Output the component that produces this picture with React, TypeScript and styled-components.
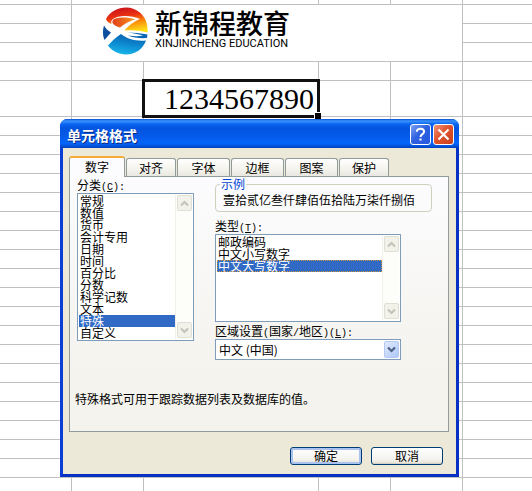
import React, { useState } from "react";
import styled, { createGlobalStyle, css } from "styled-components";

const GlobalStyle = createGlobalStyle`
  * { box-sizing: border-box; }
  body {
    margin: 0;
    background: #fff;
    color: #000;
    font-family: "Noto Sans CJK SC", sans-serif;
    font-size: 12px;
    line-height: 16px;
  }
  button, select { font: inherit; color: inherit; }
`;

const Page = styled.main`
  position: relative;
  height: 100vh;
  min-height: 480px;
  overflow: hidden;
`;

/* ---------- worksheet ---------- */

const Sheet = styled.table`
  width: 100%;
  table-layout: fixed;
  border-collapse: separate;
  border-spacing: 0;
`;

const Column = styled.col<{ $width?: number }>`
  width: ${(p) => (p.$width ? `${p.$width}px` : "auto")};
`;

const Row = styled.tr<{ $height?: number }>`
  height: ${(p) => p.$height ?? 19}px;
`;

const Cell = styled.td`
  position: relative;
  padding: 0;
  border-right: 1px solid #c0c0c0;
  border-bottom: 1px solid #c0c0c0;

  &:last-child {
    border-right: 0;
  }
`;

const SelectedCell = styled(Cell)`
  padding-right: 4px;
  font-family: "Liberation Serif", serif;
  font-size: 30px;
  line-height: 35px;
  text-align: right;
`;

const SelectionFrame = styled.span`
  position: absolute;
  inset: -2px;
  z-index: 1;
  border: 3px solid #111;
  pointer-events: none;

  &::after {
    content: "";
    position: absolute;
    right: -4px;
    bottom: -4px;
    width: 6px;
    height: 6px;
    background: #000;
    border-top: 1px solid #fff;
    border-left: 1px solid #fff;
  }
`;

const Brand = styled.div`
  display: flex;
  align-items: center;
  gap: 7px;
  padding: 0 0 4px 30px;
`;

const BrandText = styled.div`
  display: flex;
  flex-direction: column;
  gap: 2px;
  padding-bottom: 4px;
  white-space: nowrap;
`;

const BrandName = styled.strong`
  font-size: 27px;
  font-weight: 500;
  line-height: 26px;
`;

const BrandLatin = styled.span`
  font-family: Roboto, sans-serif;
  font-size: 11px;
  line-height: 11px;
`;

/* ---------- dialog ---------- */

const Dialog = styled.section`
  position: absolute;
  z-index: 2;
  left: 60px;
  top: 119px;
  width: 75%;
  min-width: 399px;
  max-width: 480px;
  background: #ece9d8;
  border: 3px solid #0a3fd6;
  border-top: 0;
  border-right-color: #0831c4;
  border-bottom-color: #0831c4;
  border-radius: 8px 8px 0 0;
`;

const TitleBar = styled.header`
  display: flex;
  align-items: center;
  gap: 2px;
  height: 29px;
  margin: 0 -3px;
  padding: 2px 5px 0 7px;
  border-radius: 7px 7px 0 0;
  background: linear-gradient(#0a4fd0 0, #3c94ff 2px, #0a66f0 5px, #0355e0 9px, #0459e8 17px, #0566fb 24px, #0453dd 27px, #0240b8 29px);
`;

const Title = styled.h1`
  flex: 1;
  margin: 0;
  color: #fff;
  font-size: 14px;
  font-weight: 700;
  line-height: 24px;
  text-shadow: 1px 1px 0 #0a2a80;
`;

const CaptionButton = styled.button<{ $danger?: boolean }>`
  display: grid;
  place-items: center;
  width: 21px;
  height: 21px;
  padding: 0;
  border: 1px solid #fff;
  border-radius: 3px;
  background: ${(p) =>
    p.$danger
      ? "linear-gradient(135deg, #ee9478, #e0532e 45%, #c8401c)"
      : "linear-gradient(135deg, #7fa3f5, #2f62e0 45%, #2458e0)"};
`;

const Body = styled.div`
  padding: 8px 7px 9px 6px;
`;

const TabList = styled.div`
  display: flex;
  align-items: flex-end;
  gap: 1px;
  height: 20px;
`;

const Tab = styled.button<{ $wide?: boolean }>`
  width: ${(p) => (p.$wide ? 53 : 50)}px;
  height: 18px;
  padding: 0;
  border: 1px solid #919b9c;
  border-bottom: 0;
  border-radius: 3px 3px 0 0;
  background: linear-gradient(#fff, #f4f3ec 60%, #e9e8e0);
  line-height: 16px;

  &[aria-selected="true"] {
    position: relative;
    width: 56px;
    height: 21px;
    margin-bottom: -1px;
    padding-bottom: 2px;
    border-top: 2px solid #f5ac36;
    background: #fcfcfe;
  }
`;

const Panel = styled.div`
  padding: 0 16px 24px 7px;
  border: 1px solid #919b9c;
  background: linear-gradient(#fcfcfe, #f4f3ee 75%);
`;

const Columns = styled.div`
  display: grid;
  grid-template-columns: 117px 1fr;
  gap: 21px;
`;

const Stack = styled.div`
  display: flex;
  flex-direction: column;
  align-items: flex-start;
`;

const Label = styled.label`
  display: block;
  height: 16px;
  white-space: nowrap;
`;

const Latin = styled.span`
  font-family: "Liberation Mono", monospace;
  font-size: 10px;
`;

const ListFrame = styled.div<{ $rows: number; $width: number }>`
  display: flex;
  width: ${(p) => p.$width}px;
  height: ${(p) => p.$rows * 12 + 4}px;
  padding: 1px;
  border: 1px solid #7f9db9;
  background: #fff;
`;

const ListSelect = styled.select<{ $focused?: boolean }>`
  flex: 1;
  min-width: 0;
  height: 100%;
  padding: 0;
  border: 0;
  border-radius: 0;
  outline: 0;
  overflow: hidden;
  background: #fff;
  scrollbar-width: none;

  option {
    display: flex;
    align-items: center;
    height: 12px;
    min-height: 12px;
    padding: 0 1px 2px;
    overflow: visible;
    line-height: 12px;
  }
  option:checked {
    background: linear-gradient(#316ac5, #316ac5);
    color: #fff;
    -webkit-text-fill-color: #fff;
    ${(p) =>
      p.$focused &&
      css`
        outline: 1px dotted #ce953a;
        outline-offset: -1px;
      `}
  }
`;

const ScrollTrack = styled.div`
  display: flex;
  flex-direction: column;
  justify-content: space-between;
  width: 17px;
  padding: 0 0 1px 1px;
  border-left: 1px solid #f0efe8;
  background: #fdfdfa;
`;

const ScrollButton = styled.button`
  display: grid;
  place-items: center;
  width: 15px;
  height: 16px;
  padding: 0;
  border: 1px solid #e0dfd4;
  border-radius: 2px;
  background: #f3f2ea;
`;

const Sample = styled.fieldset`
  min-width: 0;
  width: 217px;
  margin: 0 0 6px;
  padding: 0 4px 2px;
  border: 1px solid #d0d0bf;
  border-radius: 4px;
`;

const SampleLegend = styled.legend`
  padding: 0 1px;
  color: #0046d5;
  line-height: 14px;
`;

const SampleValue = styled.output`
  display: block;
  padding-left: 3px;
  line-height: 18px;
  white-space: nowrap;
`;

const Combo = styled.div`
  position: relative;
  width: 186px;
  height: 21px;
`;

const ComboSelect = styled.select`
  appearance: none;
  width: 100%;
  height: 21px;
  padding: 0 18px 0 3px;
  border: 1px solid #7f9db9;
  border-radius: 0;
  background: #fff;
  line-height: 18px;
`;

const ComboArrow = styled.span`
  position: absolute;
  top: 2px;
  right: 2px;
  display: grid;
  place-items: center;
  width: 15px;
  height: 17px;
  border: 1px solid #b4c8f4;
  border-radius: 2px;
  background: linear-gradient(135deg, #e1eafe, #aec8f7);
  pointer-events: none;
`;

const Spacer = styled.div`
  height: 1px;
`;

const Note = styled.p`
  margin: 31px 0 0 -2px;
`;

const Actions = styled.footer`
  display: flex;
  justify-content: flex-end;
  gap: 9px;
  padding: 15px 6px 0 0;
`;

const ActionButton = styled.button<{ $primary?: boolean }>`
  width: 72px;
  height: 18px;
  padding: 0;
  border: 1px solid #003c74;
  border-radius: 3px;
  background: linear-gradient(#fff, #f4f3ee 70%, #e3e0d4);
  box-shadow: ${(p) =>
    p.$primary ? "inset 0 0 0 2px #a9c2f0" : "inset 0 -1px 0 #d6d0c5"};
  line-height: 16px;
`;

function Chevron({ up, color }: { up?: boolean; color: string }) {
  return (
    <svg width="9" height="7" viewBox="0 0 9 7" aria-hidden="true">
      <path
        d={up ? "M1 5.5 4.5 2 8 5.5" : "M1 1.5 4.5 5 8 1.5"}
        fill="none"
        stroke={color}
        strokeWidth="2.2"
      />
    </svg>
  );
}

function Emblem() {
  return (
    <svg width="46" height="48" viewBox="0 0 46 48" aria-hidden="true">
      <defs>
        <linearGradient id="warm" x1="0.3" y1="0" x2="0.6" y2="1">
          <stop offset="0" stopColor="#c9101c" />
          <stop offset="0.35" stopColor="#ea3212" />
          <stop offset="0.65" stopColor="#fb8f0a" />
          <stop offset="1" stopColor="#ffe21a" />
        </linearGradient>
        <linearGradient id="cool" x1="0.7" y1="0" x2="0.4" y2="1">
          <stop offset="0" stopColor="#0a5cab" />
          <stop offset="0.5" stopColor="#0c87cf" />
          <stop offset="1" stopColor="#19b5ea" />
        </linearGradient>
        <linearGradient id="inner" x1="0" y1="0" x2="1" y2="0">
          <stop offset="0" stopColor="#e0401c" />
          <stop offset="1" stopColor="#f8941c" />
        </linearGradient>
      </defs>
      <path d="M4 12C8 4.500 16 .5 24 .5c11 0 20.500 8 21.500 20 .2 2 .2 3.500 0 5-8-2-15-2.500-23-2C26 19 32 14.500 38 12 30 8.500 17 7.500 11 12c-2 1.600-2 3-1.500 5C6.500 16 4.500 14 4 12Z" fill="url(#warm)" />
      <path d="M10.500 16c-.5-2 .5-3.800 3-4.500C19 10 27 10.500 33 12.300c-6 2-10.500 4.700-15 8.200-3.500-.8-6-2.300-7.500-4.500Z" fill="url(#inner)" />
      <path d="M2 18.500c1.500 3 4 5 7 7L2.500 33C.5 28.500.5 23 2 18.500Z" fill="#0d4f9e" />
      <path d="M6 38.500c4-4.500 8-8.500 13-11.500 6 5 15 7.500 25 6.500C41 42 33.500 47.500 24 47.500c-7.500 0-14-3.500-18-9Z" fill="url(#cool)" />
      <path d="M25 25.500c7 .2 14 .8 20.500 2l-.6 3.500C39 31.500 31 30.800 26 28.500c6 .9 11 .9 15 .1-5-1.500-10-2.400-16-3.100Z" fill="#0b66b5" />
    </svg>
  );
}

const categories = ["常规", "数值", "货币", "会计专用", "日期", "时间", "百分比", "分数", "科学记数", "文本", "特殊", "自定义"];
const types = ["邮政编码", "中文小写数字", "中文大写数字"];
const tabs = ["数字", "对齐", "字体", "边框", "图案", "保护"];

type ListProps = {
  id: string;
  items: string[];
  initial: string;
  rows: number;
  width: number;
  focused?: boolean;
};

function ListBox({ id, items, initial, rows, width, focused }: ListProps) {
  const [value, setValue] = useState(initial);
  return (
    <ListFrame $rows={rows} $width={width}>
      <ListSelect id={id} size={rows} value={value} $focused={focused} onChange={(e) => setValue(e.target.value)}>
        {items.map((item) => (
          <option key={item}>{item}</option>
        ))}
      </ListSelect>
      <ScrollTrack>
        <ScrollButton type="button" disabled aria-label="向上滚动">
          <Chevron up color="#c5c4b8" />
        </ScrollButton>
        <ScrollButton type="button" disabled aria-label="向下滚动">
          <Chevron color="#c5c4b8" />
        </ScrollButton>
      </ScrollTrack>
    </ListFrame>
  );
}

const cells = (count: number) => Array.from({ length: count }, (_, i) => <Cell key={i} />);

function Worksheet() {
  return (
    <Sheet>
      <colgroup>
        <Column $width={72} />
        <Column $width={72} />
        <Column $width={175} />
        <Column $width={72} />
        <Column $width={72} />
        <Column />
      </colgroup>
      <tbody>
        <Row $height={5}>{cells(6)}</Row>
        <Row>
          <Cell />
          <Cell colSpan={4} rowSpan={3}>
            <Brand>
              <Emblem />
              <BrandText>
                <BrandName>新锦程教育</BrandName>
                <BrandLatin>XINJINCHENG EDUCATION</BrandLatin>
              </BrandText>
            </Brand>
          </Cell>
          <Cell />
        </Row>
        <Row>{cells(2)}</Row>
        <Row>{cells(2)}</Row>
        <Row>{cells(6)}</Row>
        <Row $height={36}>
          {cells(2)}
          <SelectedCell>
            1234567890
            <SelectionFrame />
          </SelectedCell>
          {cells(3)}
        </Row>
        {Array.from({ length: 20 }, (_, i) => (
          <Row key={i}>{cells(6)}</Row>
        ))}
      </tbody>
    </Sheet>
  );
}

export default function App() {
  const [tab, setTab] = useState("数字");
  return (
    <Page>
      <GlobalStyle />
      <Worksheet />
      <Dialog role="dialog" aria-labelledby="dialog-title">
        <TitleBar>
          <Title id="dialog-title">单元格格式</Title>
          <CaptionButton type="button" aria-label="帮助">
            <svg width="13" height="15" viewBox="0 0 13 15" aria-hidden="true">
              <path d="M2.800 4.800C2.800 2.800 4.300 1.800 6.400 1.800s3.700 1 3.700 2.900c0 2.300-3.600 2.600-3.600 5.300" fill="none" stroke="#fff" strokeWidth="2" />
              <path d="M5.400 11.500h2.200v2H5.400z" fill="#fff" />
            </svg>
          </CaptionButton>
          <CaptionButton type="button" $danger aria-label="关闭">
            <svg width="13" height="13" viewBox="0 0 13 13" aria-hidden="true">
              <path d="M1.500 1.500l10 10M11.500 1.500l-10 10" stroke="#fff" strokeWidth="2.200" />
            </svg>
          </CaptionButton>
        </TitleBar>
        <Body>
          <TabList role="tablist">
            {tabs.map((name, i) => (
              <Tab key={name} type="button" role="tab" aria-selected={tab === name} $wide={i > 1 && i < 5} onClick={() => setTab(name)}>
                {name}
              </Tab>
            ))}
          </TabList>
          <Panel role="tabpanel">
            <Columns>
              <Stack>
                <Label htmlFor="category">
                  分类<Latin>(<u>C</u>):</Latin>
                </Label>
                <ListBox id="category" items={categories} initial="特殊" rows={12} width={117} />
              </Stack>
              <Stack>
                <Sample>
                  <SampleLegend>示例</SampleLegend>
                  <SampleValue>壹拾贰亿叁仟肆佰伍拾陆万柒仟捌佰</SampleValue>
                </Sample>
                <Label htmlFor="type">
                  类型<Latin>(<u>T</u>):</Latin>
                </Label>
                <ListBox id="type" items={types} initial="中文大写数字" rows={7} width={186} focused />
                <Spacer />
                <Label htmlFor="locale">
                  区域设置<Latin>(</Latin>国家<Latin>/</Latin>地区<Latin>)(<u>L</u>):</Latin>
                </Label>
                <Combo>
                  <ComboSelect id="locale" defaultValue="cn">
                    <option value="cn">中文 (中国)</option>
                  </ComboSelect>
                  <ComboArrow>
                    <Chevron color="#4d6185" />
                  </ComboArrow>
                </Combo>
              </Stack>
            </Columns>
            <Note>特殊格式可用于跟踪数据列表及数据库的值。</Note>
          </Panel>
          <Actions>
            <ActionButton type="button" $primary>确定</ActionButton>
            <ActionButton type="button">取消</ActionButton>
          </Actions>
        </Body>
      </Dialog>
    </Page>
  );
}
